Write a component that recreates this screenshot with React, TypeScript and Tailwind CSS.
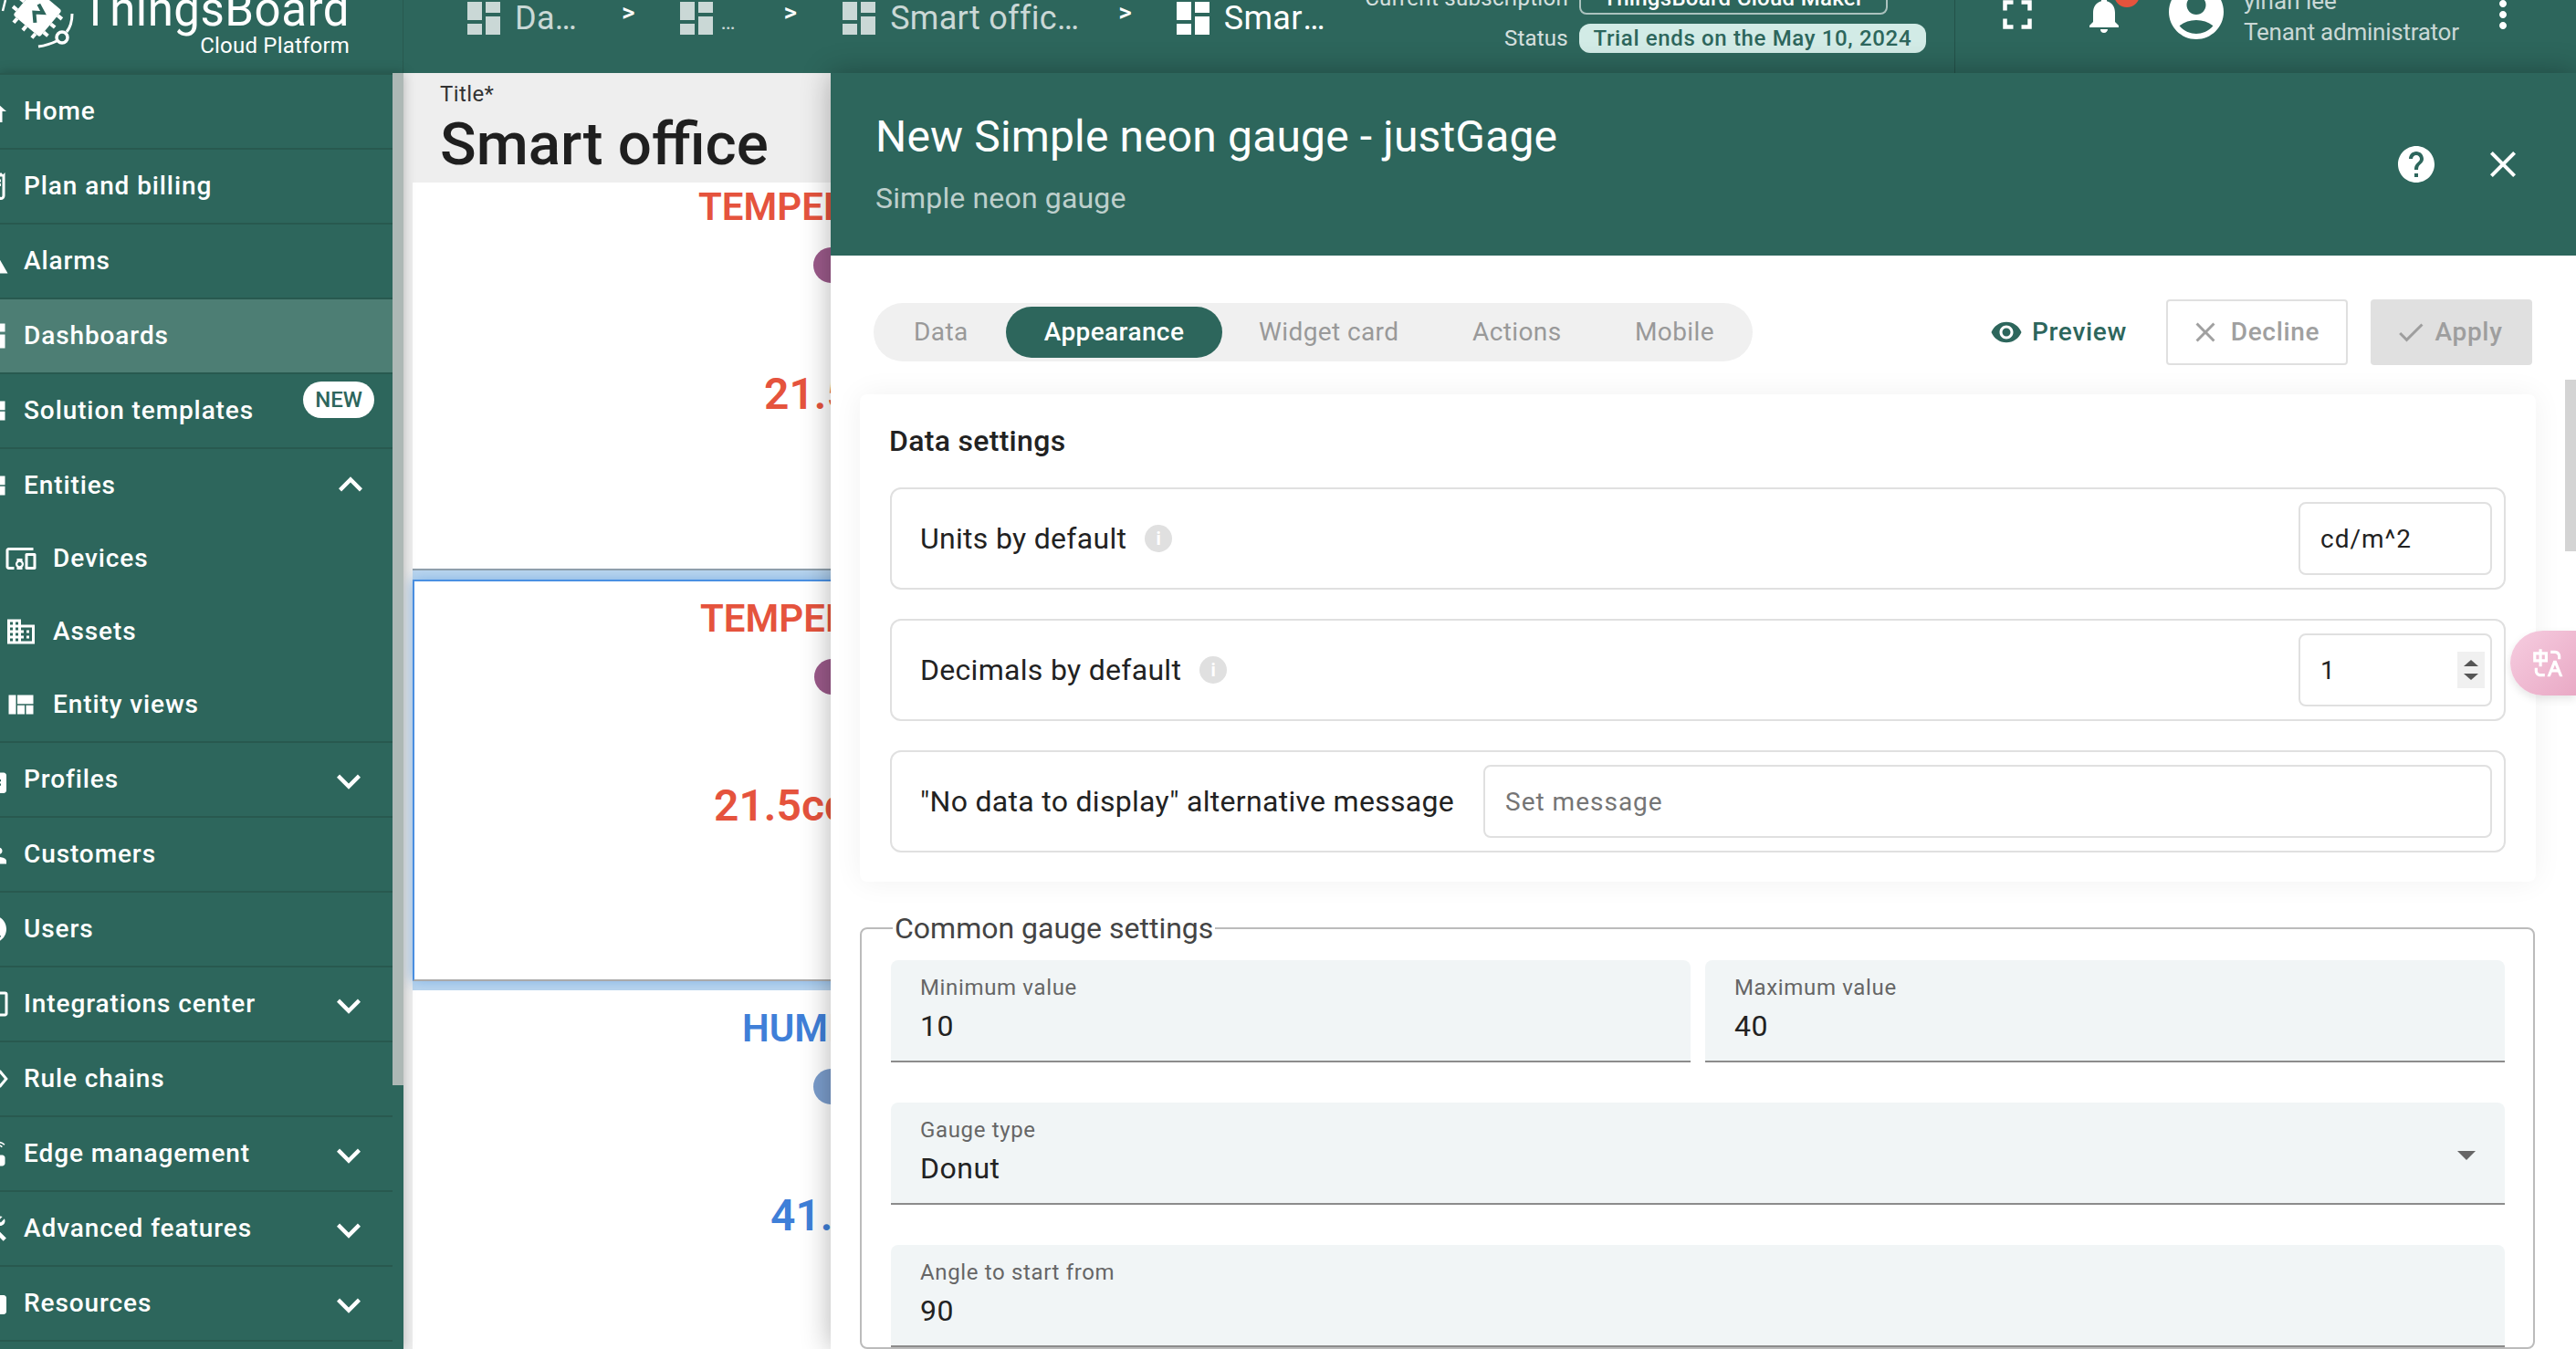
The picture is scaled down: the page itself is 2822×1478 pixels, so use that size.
import React from 'react';
import {
  MdHome, MdReceiptLong, MdWarning, MdDashboard, MdViewQuilt, MdDevicesOther, MdDomain, MdBadge,
  MdSupervisorAccount, MdAccountCircle, MdInput, MdSettingsEthernet, MdRouter, MdConstruction, MdFolder,
  MdKeyboardArrowDown, MdKeyboardArrowUp, MdNotifications, MdFullscreen, MdMoreVert, MdHelp, MdClose,
  MdVisibility, MdCheck, MdArrowDropDown,
} from 'react-icons/md';
import { RiTranslate } from 'react-icons/ri';

type Item = { label: string; icon: React.ComponentType<{ size?: number; className?: string }>; chevron?: 'up' | 'down'; active?: boolean; badge?: boolean };

const top: Item[] = [
  { label: 'Home', icon: MdHome },
  { label: 'Plan and billing', icon: MdReceiptLong },
  { label: 'Alarms', icon: MdWarning },
  { label: 'Dashboards', icon: MdDashboard, active: true },
  { label: 'Solution templates', icon: MdViewQuilt, badge: true },
];
const bottom: Item[] = [
  { label: 'Profiles', icon: MdBadge, chevron: 'down' },
  { label: 'Customers', icon: MdSupervisorAccount },
  { label: 'Users', icon: MdAccountCircle },
  { label: 'Integrations center', icon: MdInput, chevron: 'down' },
  { label: 'Rule chains', icon: MdSettingsEthernet },
  { label: 'Edge management', icon: MdRouter, chevron: 'down' },
  { label: 'Advanced features', icon: MdConstruction, chevron: 'down' },
  { label: 'Resources', icon: MdFolder, chevron: 'down' },
];
const sub: Item[] = [
  { label: 'Devices', icon: MdDevicesOther },
  { label: 'Assets', icon: MdDomain },
  { label: 'Entity views', icon: MdViewQuilt },
];

function NavRow({ item }: { item: Item }) {
  const Icon = item.icon;
  return (
    <div className={`relative flex h-[82px] shrink-0 items-center border-b-2 border-[#28594f] ${item.active ? 'bg-[#4d7e74]' : ''}`}>
      <Icon size={36} className="-ml-[26px] mr-[16px] shrink-0 text-white" />
      <span className="text-[28px] leading-[40px] font-medium tracking-[0.9px] text-white">{item.label}</span>
      {item.badge && (
        <span className="absolute top-[8px] left-[332px] flex h-[40px] w-[78px] items-center justify-center rounded-full bg-white text-[24px] font-medium text-[#2d665c]">NEW</span>
      )}
      {item.chevron === 'down' && <MdKeyboardArrowDown size={52} className="absolute top-[16px] left-[356px] text-white" />}
    </div>
  );
}

function SubRow({ item }: { item: Item }) {
  const Icon = item.icon;
  return (
    <div className="flex h-[80px] shrink-0 items-center">
      <Icon size={36} className="ml-[5px] mr-[17px] shrink-0 text-white" />
      <span className="text-[28px] leading-[40px] font-medium tracking-[0.9px] text-white">{item.label}</span>
    </div>
  );
}

function Logo() {
  return (
    <svg width="90" height="60" viewBox="0 0 90 60" className="block shrink-0" fill="none">
      <g transform="rotate(40 41 14)">
        <rect x="22" y="-5" width="38" height="38" rx="3" fill="#fff" />
        <path d="M16 2h6M16 14h6M16 26h6M60 2h6M60 14h6M60 26h6M28 33v6M41 33v6M54 33v6" stroke="#fff" strokeWidth="4" />
        <path d="M36 6l10 4-8 6 8 8" stroke="#2d665c" strokeWidth="4" />
      </g>
      <path d="M79 15c0 8-2 15-6 20" stroke="#fff" strokeWidth="3" />
      <circle cx="68" cy="41" r="6" stroke="#fff" strokeWidth="3.5" />
      <path d="M62 45c-6 3-13 5-20 6" stroke="#fff" strokeWidth="3" />
      <path d="M6 0l-3 12" stroke="#fff" strokeWidth="2.5" />
    </svg>
  );
}

function Crumb({ text, w, dim, dots }: { text: string; w: string; dim?: boolean; dots?: boolean }) {
  return (
    <div className={`flex items-center ${dim ? 'text-white/75' : 'text-white'}`}>
      <MdDashboard size={48} className="-ml-[6px] -mr-[6px] shrink-0" />
      {dots ? (
        <span className="ml-[9px] mt-[8px] text-[24px] leading-[38px]">{text}</span>
      ) : (
        <span className={`ml-[16px] truncate text-[36px] leading-[46px] tracking-[0.3px] ${w}`}>{text}</span>
      )}
    </div>
  );
}

function Sep({ className }: { className: string }) {
  return <span className={`text-[28px] leading-[40px] font-medium text-white ${className}`}>&gt;</span>;
}

function TopBar() {
  return (
    <div className="flex h-[80px] shrink-0 overflow-hidden bg-[#2d665c] text-white">
      <div className="flex w-[442px] shrink-0 border-r border-[#28594f]">
        <Logo />
        <div className="-mt-[17px] flex w-[293px] flex-col items-end">
          <span className="text-[51px] leading-[56px] tracking-[0.5px]">ThingsBoard</span>
          <span className="-mt-[4px] text-[24px] leading-[30px] tracking-[0.2px]">Cloud Platform</span>
        </div>
      </div>
      <div className="relative flex h-[80px] flex-1 items-start">
        <div className="-mt-[4px] ml-[70px] flex items-start">
          <Crumb text="Dashboards" w="w-[70px]" dim />
          <Sep className="ml-[47px] mt-[-2px]" />
          <div className="ml-[49px]"><Crumb text="…" w="" dots dim /></div>
          <Sep className="ml-[53px] mt-[-2px]" />
          <div className="ml-[50px]"><Crumb text="Smart office 1" w="w-[209px]" dim /></div>
          <Sep className="ml-[41px] mt-[-2px]" />
          <div className="ml-[49px]"><Crumb text="Smart office 2" w="w-[116px]" /></div>
        </div>
        <div className="absolute -top-[20px] left-[1052px] flex items-center gap-[12px] whitespace-nowrap">
          <span className="w-[224px] text-right text-[24px] tracking-[0.3px] text-white/80">Current subscription</span>
          <span className="flex h-[35px] w-[338px] items-center justify-center rounded-[8px] border-2 border-white/60 text-[24px] font-medium tracking-[0.3px]">ThingsBoard Cloud Maker</span>
        </div>
        <div className="absolute top-[26px] left-[1206px] flex items-center gap-[12px] whitespace-nowrap">
          <span className="text-[24px] leading-[32px] tracking-[0.2px] text-white/80">Status</span>
          <span className="flex h-[32px] w-[380px] items-center justify-center rounded-[12px] bg-[#d2ebe6] text-[24px] font-medium tracking-[0.65px] text-[#2d665c]">Trial ends on the May 10, 2024</span>
        </div>
        <div className="absolute top-0 left-[1699px] h-[80px] w-px bg-black/20" />
        <MdFullscreen size={54} className="absolute -top-[11px] left-[1741px]" />
        <MdNotifications size={48} className="absolute -top-[8px] left-[1839px]" />
        <span className="absolute -top-[20px] left-[1874px] h-[28px] w-[28px] rounded-full bg-[#e5533d]" />
        <MdAccountCircle size={72} className="absolute -top-[23px] left-[1928px]" />
        <div className="absolute -top-[14px] left-[2016px] flex flex-col whitespace-nowrap">
          <span className="text-[26px] leading-[30px] text-white/75">yinan lee</span>
          <span className="mt-[4px] text-[26px] leading-[30px] tracking-[-0.25px] text-white/75">Tenant administrator</span>
        </div>
        <MdMoreVert size={48} className="absolute -top-[8px] left-[2276px]" />
      </div>
    </div>
  );
}

function Sidebar() {
  return (
    <div className="relative z-10 flex w-[442px] shrink-0 overflow-hidden bg-[#2d665c] shadow-[0_0_12px_rgba(0,0,0,0.25)]">
      <div className="flex w-[430px] shrink-0 flex-col">
        <div className="h-[2px] shrink-0 bg-[#28594f]" />
        {top.map((i) => <NavRow key={i.label} item={i} />)}
        <div className="shrink-0 border-b-2 border-[#28594f]">
          <div className="relative flex h-[80px] items-center">
            <MdViewQuilt size={36} className="-ml-[26px] mr-[16px] shrink-0 text-white" />
            <span className="text-[28px] leading-[40px] font-medium tracking-[0.9px] text-white">Entities</span>
            <MdKeyboardArrowUp size={52} className="absolute top-[13px] left-[358px] text-white" />
          </div>
          {sub.map((i) => <SubRow key={i.label} item={i} />)}
        </div>
        {bottom.map((i) => <NavRow key={i.label} item={i} />)}
      </div>
      <div className="h-[1109px] w-[12px] shrink-0 bg-[#adb8b5]" />
    </div>
  );
}

function Widget({ title, value, color, dot, titleLeft, dotLeft, valueLeft, pt, className }: { title: string; value: string; color: string; dot: string; titleLeft: string; dotLeft: string; valueLeft: string; pt: string; className: string }) {
  return (
    <div className={`w-[900px] shrink-0 overflow-hidden bg-white ${pt} ${className}`}>
      <div className={`text-[42px] leading-[42px] font-semibold whitespace-nowrap ${color} ${titleLeft}`}>{title}</div>
      <div className={`mt-[23px] h-[39px] w-[40px] rounded-full ${dot} ${dotLeft}`} />
      <div className={`mt-[94px] text-[48px] leading-[56px] font-semibold whitespace-nowrap ${color} ${valueLeft}`}>{value}</div>
    </div>
  );
}

function DashboardColumn() {
  return (
    <div className="flex w-[468px] shrink-0 flex-col overflow-hidden bg-[#eeeeee]">
      <div className="h-[120px] shrink-0 pt-[9px] pl-[40px]">
        <div className="text-[24px] leading-[28px] tracking-[0.4px] text-[#333]">Title*</div>
        <div className="mt-[5px] text-[65.5px] leading-[72px] font-medium text-[#1f1f1f]">Smart office</div>
      </div>
      <div className="ml-[10px] flex flex-col bg-[#bcd6ee]">
        <Widget className="h-[425px] border-b-2 border-[#8f9ea8]" pt="pt-[6px]" title="TEMPERATURE" value="21.5°C" color="text-[#e5533d]" dot="bg-[#9b5a8a]" titleLeft="ml-[313px]" dotLeft="ml-[439px]" valueLeft="ml-[385px]" />
        <Widget className="relative z-[1] mt-[10px] h-[440px] border-2 border-[#4a90e2] border-b-[#aaaaaa] shadow-[0_0_14px_#7fb2e5]" pt="pt-[20px]" title="TEMPERATURE" value="21.5cd/m^2" color="text-[#e5533d]" dot="bg-[#9b5a8a]" titleLeft="ml-[313px]" dotLeft="ml-[438px]" valueLeft="ml-[328px]" />
        <Widget className="relative z-[2] mt-[10px] h-[400px]" pt="pt-[21px]" title="HUMIDITY" value="41.2%" color="text-[#3f7fd8]" dot="bg-[#7b9dcc]" titleLeft="ml-[361px]" dotLeft="ml-[439px]" valueLeft="ml-[392px]" />
      </div>
    </div>
  );
}

function InfoDot() {
  return (
    <span className="ml-[20px] flex h-[30px] w-[30px] items-center justify-center rounded-full bg-[#e0e0e0] text-[20px] leading-none font-bold text-white">i</span>
  );
}

function FilledField({ label, value, select }: { label: string; value: string; select?: boolean }) {
  return (
    <div className="relative h-[112px] rounded-t-[8px] border-b-2 border-[#8c8c8c] bg-[#f1f5f6] pt-[14px] pl-[32px]">
      <div className="text-[24px] leading-[32px] tracking-[0.65px] text-[#666]">{label}</div>
      <div className="mt-[6px] text-[32px] leading-[40px] tracking-[0.5px] text-[#222]">{value}</div>
      {select && <MdArrowDropDown size={48} className="absolute top-[33px] right-[18px] text-[#666]" />}
    </div>
  );
}

function Dialog() {
  return (
    <div className="relative z-20 flex flex-1 flex-col overflow-hidden bg-white shadow-[0_0_30px_rgba(0,0,0,0.3)]">
      <div className="flex h-[200px] shrink-0 items-start justify-between bg-[#2d665c] pt-[42px] pl-[49px] text-white">
        <div>
          <div className="text-[48px] leading-[56px] tracking-[0.15px]">New Simple neon gauge - justGage</div>
          <div className="mt-[19px] text-[32px] leading-[40px] tracking-[0.15px] text-white/70">Simple neon gauge</div>
        </div>
        <div className="mt-[34px] flex items-center">
          <MdHelp size={48} />
          <MdClose size={48} className="mr-[56px] ml-[47px]" />
        </div>
      </div>
      <div className="flex min-h-0 flex-1 flex-col">
        <div className="mt-[48px] flex h-[72px] shrink-0 items-center justify-between pr-[48px] pl-[47px]">
          <div className="flex h-[64px] w-[963px] items-center rounded-full bg-[#f0f0f0] text-[28px] tracking-[0.4px] text-[#999]">
            <span className="ml-[44px] w-[101px]">Data</span>
            <span className="flex h-[56px] w-[237px] items-center justify-center rounded-[28px] bg-[#2d665c] font-medium text-white">Appearance</span>
            <span className="ml-[40px] w-[234px]">Widget card</span>
            <span className="w-[178px]">Actions</span>
            <span>Mobile</span>
          </div>
          <div className="flex items-center">
            <MdVisibility size={36} className="text-[#2d665c]" />
            <span className="ml-[10px] text-[28px] font-medium tracking-[0.7px] text-[#2d665c]">Preview</span>
            <div className="ml-[43px] flex h-[72px] w-[199px] items-center justify-center gap-[10px] rounded-[4px] border-2 border-[#e0e0e0] pr-[6px] text-[28px] font-medium tracking-[0.7px] text-[#a0a0a0]">
              <MdClose size={36} />Decline
            </div>
            <div className="ml-[25px] flex h-[72px] w-[177px] items-center justify-center gap-[8px] rounded-[4px] bg-[#e0e0e0] pr-[6px] text-[28px] font-medium tracking-[0.7px] text-[#9e9e9e]">
              <MdCheck size={36} />Apply
            </div>
          </div>
        </div>

        <div className="mt-[32px] ml-[32px] w-[1836px] shrink-0 rounded-[8px] bg-white px-[33px] pt-[31px] pb-[32px] shadow-[0_0_32px_rgba(0,0,0,0.06)]">
          <div className="-ml-[1px] text-[32px] leading-[40px] font-medium tracking-[0.3px] text-[#222]">Data settings</div>
          <div className="mt-[31px] flex h-[112px] items-center rounded-[12px] border-2 border-[#e0e0e0] pr-[13px] pl-[31px]">
            <span className="text-[32px] tracking-[0.3px] text-[#222]">Units by default</span>
            <InfoDot />
            <div className="ml-auto flex h-[80px] w-[212px] items-center rounded-[8px] border-2 border-[#e0e0e0] pt-[2px] pl-[22px] text-[28px] tracking-[1px] text-[#222]">cd/m^2</div>
          </div>
          <div className="mt-[32px] flex h-[112px] items-center rounded-[12px] border-2 border-[#e0e0e0] pr-[13px] pl-[31px]">
            <span className="text-[32px] tracking-[0.3px] text-[#222]">Decimals by default</span>
            <InfoDot />
            <div className="ml-auto flex h-[80px] w-[212px] items-center justify-between rounded-[8px] border-2 border-[#e0e0e0] pr-[6px] pl-[22px] text-[28px] text-[#222]">
              <span className="pt-[2px]">1</span>
              <span className="flex h-[40px] w-[30px] flex-col items-center justify-center gap-[8px] bg-[#f0f0f0]">
                <span className="h-0 w-0 border-x-[8px] border-b-[7px] border-x-transparent border-b-[#555]" />
                <span className="h-0 w-0 border-x-[8px] border-t-[7px] border-x-transparent border-t-[#555]" />
              </span>
            </div>
          </div>
          <div className="mt-[32px] flex h-[112px] items-center rounded-[12px] border-2 border-[#e0e0e0] pr-[13px] pl-[31px]">
            <span className="text-[32px] tracking-[0.3px] text-[#222]">"No data to display" alternative message</span>
            <div className="ml-auto flex h-[80px] w-[1105px] items-center rounded-[8px] border-2 border-[#e0e0e0] pt-[2px] pl-[22px] text-[28px] tracking-[1px] text-[#757575]">Set message</div>
          </div>
        </div>

        <fieldset className="mt-[31px] ml-[32px] w-[1835px] shrink-0 rounded-[8px] border-2 border-[#bbbbbb] pr-[31px] pl-[32px]">
          <legend className="ml-[2px] px-[2px] text-[32px] leading-[40px] text-[#444]">Common gauge settings</legend>
          <div className="mt-[15px] grid grid-cols-2 gap-[16px]">
            <FilledField label="Minimum value" value="10" />
            <FilledField label="Maximum value" value="40" />
          </div>
          <div className="mt-[44px]"><FilledField label="Gauge type" value="Donut" select /></div>
          <div className="mt-[44px]"><FilledField label="Angle to start from" value="90" /></div>
        </fieldset>
      </div>
      <div className="absolute top-[336px] right-0 h-[188px] w-[12px] bg-[#d4d4d4]" />
      <div className="absolute top-[611px] right-0 flex h-[71px] w-[72px] items-center justify-start rounded-l-[36px] bg-gradient-to-br from-[#f6cde0] to-[#e9a9c5] pl-[22px] shadow-[0_4px_10px_rgba(0,0,0,0.1)]">
        <RiTranslate size={38} className="text-white" />
      </div>
    </div>
  );
}

export default function App() {
  return (
    <div className="flex h-[1478px] w-[2822px] flex-col overflow-hidden bg-white font-['Roboto',sans-serif]">
      <TopBar />
      <div className="flex min-h-0 flex-1">
        <Sidebar />
        <DashboardColumn />
        <Dialog />
      </div>
    </div>
  );
}
